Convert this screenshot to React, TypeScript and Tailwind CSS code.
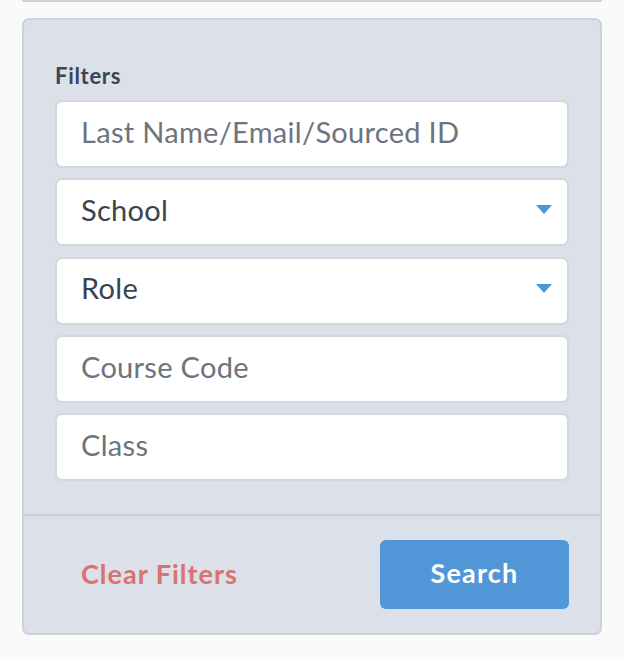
import { ChangeEvent, useState } from 'react';

const FONT = { fontFamily: 'Lato, "Open Sans", sans-serif' };

function Caret() {
  return (
    <svg width="16" height="9" viewBox="0 0 16 9" className="shrink-0">
      <path d="M0 0h16L8 9z" fill="#4f95d8" />
    </svg>
  );
}

function TextField({ placeholder }: { placeholder: string }) {
  const [value, setValue] = useState('');
  return (
    <input
      value={value}
      onChange={(e: ChangeEvent<HTMLInputElement>) => setValue(e.target.value)}
      placeholder={placeholder}
      className="h-[68px] w-full rounded-[7px] border-2 border-[#d2d6dd] bg-white px-[24px] pb-[5px] text-[29px] tracking-[0.3px] text-[#3b4350] outline-none placeholder:text-[#6e747d]"
    />
  );
}

function SelectField({ label }: { label: string }) {
  return (
    <button className="flex h-[68px] w-full items-center justify-between rounded-[7px] border-2 border-[#d2d6dd] bg-white pb-[5px] pl-[24px] pr-[15px] text-left text-[29px] tracking-[0.3px] text-[#3b4350]">
      <span>{label}</span>
      <Caret />
    </button>
  );
}

export default function App() {
  return (
    <div className="min-h-[660px] w-[624px] bg-[#fafafa] px-[22px]" style={FONT}>
      <div className="h-[2px] rounded-b-[6px] border-x-2 border-b-2 border-[#cfd3d9] bg-[#fafafa]" />

      <div className="mt-[16px] rounded-[7px] border-2 border-[#cdd2da] bg-[#dce0e8]">
        <div className="flex flex-col px-[31px] pb-[33px] pt-[44px]">
          <div className="mb-[12px] text-[22px] font-bold leading-[24px] tracking-[0.7px] text-[#3a4657]">Filters</div>
          <div className="flex flex-col gap-[10.25px]">
            <TextField placeholder="Last Name/Email/Sourced ID" />
            <SelectField label="School" />
            <SelectField label="Role" />
            <TextField placeholder="Course Code" />
            <TextField placeholder="Class" />
          </div>
        </div>

        <div className="flex items-center justify-between border-t-2 border-[#c9ced6] px-[31px] pb-[24px] pt-[24px]">
          <button className="pl-[26px] text-[27px] font-bold tracking-[1px] text-[#d9736f]">Clear Filters</button>
          <button className="h-[69px] w-[189px] rounded-[6px] bg-[#5196d6] pb-[2px] text-[27px] font-bold tracking-[1.2px] text-white">
            Search
          </button>
        </div>
      </div>
    </div>
  );
}
